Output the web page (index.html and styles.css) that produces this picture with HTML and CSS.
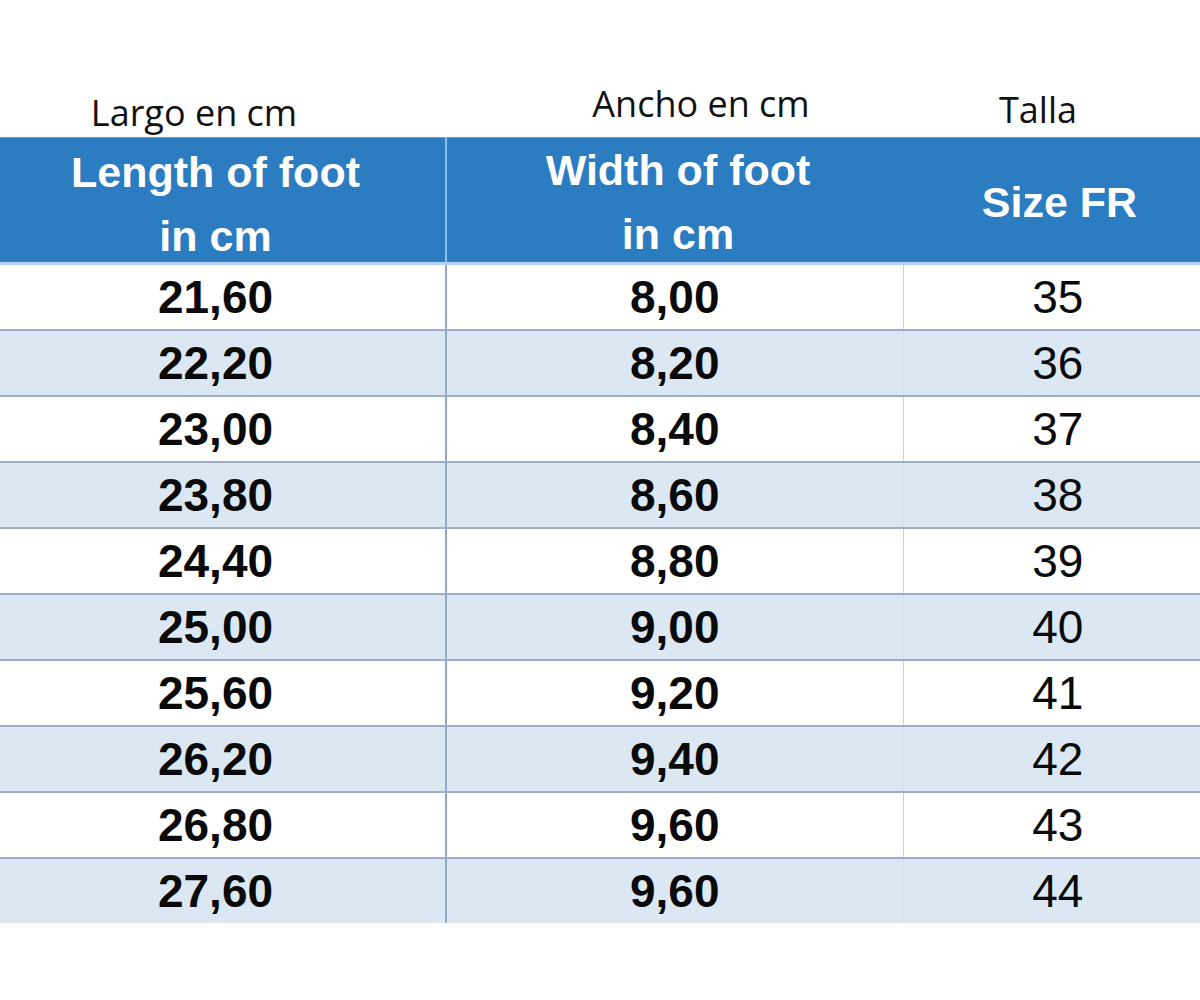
FILE: index.html
```html
<!DOCTYPE html>
<html lang="es">
<head>
<meta charset="utf-8">
<title>Size chart</title>
<link rel="stylesheet" href="styles.css">
</head>
<body>
<div class="sheet">
  <div class="labels">
    <div class="label label-1">Largo en cm</div>
    <div class="label label-2">Ancho en cm</div>
    <div class="label label-3">Talla</div>
  </div>
  <table class="chart">
    <colgroup>
      <col class="c1"><col class="c2"><col class="c3">
    </colgroup>
    <thead>
      <tr>
        <th class="h1"><div class="hcell">Length of foot<br>in cm</div></th>
        <th class="h2"><div class="hcell hcell-2">Width of foot<br>in cm</div></th>
        <th class="h3"><div class="hcell hcell-single">Size FR</div></th>
      </tr>
    </thead>
    <tbody>
      <tr><td class="len">21,60</td><td class="wid">8,00</td><td class="size">35</td></tr>
      <tr class="band"><td class="len">22,20</td><td class="wid">8,20</td><td class="size">36</td></tr>
      <tr><td class="len">23,00</td><td class="wid">8,40</td><td class="size">37</td></tr>
      <tr class="band"><td class="len">23,80</td><td class="wid">8,60</td><td class="size">38</td></tr>
      <tr><td class="len">24,40</td><td class="wid">8,80</td><td class="size">39</td></tr>
      <tr class="band"><td class="len">25,00</td><td class="wid">9,00</td><td class="size">40</td></tr>
      <tr><td class="len">25,60</td><td class="wid">9,20</td><td class="size">41</td></tr>
      <tr class="band"><td class="len">26,20</td><td class="wid">9,40</td><td class="size">42</td></tr>
      <tr><td class="len">26,80</td><td class="wid">9,60</td><td class="size">43</td></tr>
      <tr class="band last"><td class="len">27,60</td><td class="wid">9,60</td><td class="size">44</td></tr>
    </tbody>
  </table>
</div>
</body>
</html>
```

FILE: styles.css
```css
html, body {
  margin: 0;
  padding: 0;
  background: #ffffff;
}

.sheet {
  width: 1200px;
  height: 1000px;
  overflow: hidden;
}

.labels {
  display: grid;
  grid-template-columns: 446px 457px 297px;
  height: 137px;
  align-items: end;
  font-family: "Open Sans", "Noto Sans", sans-serif;
  font-size: 36px;
  line-height: 48px;
  color: #111111;
}

.label {
  text-align: center;
  white-space: nowrap;
}

.label-1 {
  padding-right: 58px;
  padding-bottom: 0;
}

.label-2 {
  padding-left: 53px;
  padding-bottom: 9px;
}

.label-3 {
  padding-right: 27px;
  padding-bottom: 3px;
}

.chart {
  width: 1200px;
  table-layout: fixed;
  border-collapse: collapse;
  border-spacing: 0;
  font-family: "Liberation Sans", Arial, sans-serif;
}

.c1 { width: 446px; }
.c2 { width: 457px; }
.c3 { width: 297px; }

.chart thead th {
  background: #2b7cc0;
  color: #ffffff;
  font-weight: bold;
  font-size: 43px;
  padding: 0;
  height: 124px;
  vertical-align: top;
  border-top: 1px solid #5c9fd6;
  border-bottom: 3px solid #b3cfe9;
}

.chart thead th.h1 {
  border-right: 2px solid #8ebfea;
  padding-right: 14px;
}

.chart thead th.h2 {
  padding-left: 6px;
}

.chart thead th.h3 {
  padding-left: 16px;
}

.hcell {
  height: 124px;
  box-sizing: border-box;
  padding-top: 2px;
  line-height: 64px;
  white-space: nowrap;
  text-align: center;
}

.hcell-2 {
  padding-top: 0;
}

.hcell-single {
  line-height: 124px;
  padding-top: 2px;
}

.chart tbody td {
  height: 64px;
  padding: 0;
  text-align: center;
  font-size: 46px;
  line-height: 64px;
  color: #0a0a0a;
  border-bottom: 2px solid #9aafc7;
}

.chart tbody tr.band td {
  background: #dbe8f4;
}

.chart tbody tr.last td {
  border-bottom: none;
}

.chart td.len {
  font-weight: bold;
  border-right: 2px solid #93a9c3;
  padding-right: 14px;
}

.chart td.wid {
  font-weight: bold;
  border-right: 1px solid #cfcfcf;
}

.chart tr.band td.wid {
  border-right-color: #d3dde8;
}

.chart td.size {
  font-weight: normal;
  padding-left: 12px;
}
```
